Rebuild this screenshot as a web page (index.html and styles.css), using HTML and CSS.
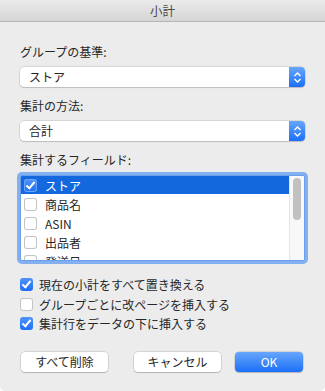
FILE: index.html
```
<!DOCTYPE html>
<html lang="ja">
<head>
  <meta charset="UTF-8">
  <title>小計</title>
  <link rel="stylesheet" href="styles.css">
</head>
<body>
  <div class="window">
    <!-- Barra de título -->
    <div class="titlebar">小計</div>

    <div class="content">
      <div class="label first">グループの基準:</div>
      <div class="popup">
        <span>ストア</span>
        <span class="stepper">
          <svg width="9" height="13" viewBox="0 0 9 13"><path d="M1.5 5 L4.5 2 L7.5 5 M1.5 8 L4.5 11 L7.5 8" fill="none" stroke="#fff" stroke-width="1.4"/></svg>
        </span>
      </div>

      <div class="label">集計の方法:</div>
      <div class="popup">
        <span>合計</span>
        <span class="stepper">
          <svg width="9" height="13" viewBox="0 0 9 13"><path d="M1.5 5 L4.5 2 L7.5 5 M1.5 8 L4.5 11 L7.5 8" fill="none" stroke="#fff" stroke-width="1.4"/></svg>
        </span>
      </div>

      <div class="label">集計するフィールド:</div>
      <div class="listbox">
        <div class="rows">
          <div class="row selected"><span class="cb on"></span>ストア</div>
          <div class="row"><span class="cb"></span>商品名</div>
          <div class="row"><span class="cb"></span>ASIN</div>
          <div class="row"><span class="cb"></span>出品者</div>
          <div class="row"><span class="cb"></span>発送日</div>
        </div>
        <div class="scrollbar"><div class="thumb"></div></div>
      </div>

      <div class="options">
        <div class="option"><span class="cb on"></span>現在の小計をすべて置き換える</div>
        <div class="option"><span class="cb"></span>グループごとに改ページを挿入する</div>
        <div class="option"><span class="cb on"></span>集計行をデータの下に挿入する</div>
      </div>

      <div class="buttons">
        <button class="btn">すべて削除</button>
        <button class="btn">キャンセル</button>
        <button class="btn primary">OK</button>
      </div>
    </div>
  </div>
</body>
</html>
```

FILE: styles.css
```
body {
  margin: 0;
  background: #ffffff;
  font-family: "Noto Sans CJK JP", "Noto Sans", sans-serif;
  font-size: 12px;
  color: #262626;
}
.window {
  width: 325px;
  height: 391px;
  background: #ececec;
  border-radius: 0 0 5px 5px;
  overflow: hidden;
}
/* Barra de título */
.titlebar {
  height: 21px;
  line-height: 21px;
  text-align: center;
  font-size: 12.5px;
  color: #4a4a4a;
  background: linear-gradient(#ebebeb, #d5d5d5);
  border-bottom: 1px solid #b6b6b6;
}
.content {
  padding: 0 20px;
}
.label {
  height: 16px;
  line-height: 16px;
  margin-top: 11px;
}
.label.first {
  margin-top: 22px;
}
/* Menús desplegables */
.popup {
  margin-top: 7px;
  height: 20px;
  background: #fff;
  border-radius: 4px;
  box-shadow: 0 0 0 0.5px rgba(0,0,0,0.18), 0 1px 1px rgba(0,0,0,0.12);
  display: flex;
  align-items: center;
  padding-left: 9px;
  overflow: hidden;
}
.popup span:first-child {
  flex: 1;
  line-height: 20px;
}
.stepper {
  width: 16px;
  height: 20px;
  background: linear-gradient(#67a6fb, #1b6ff7);
  display: flex;
  align-items: center;
  justify-content: center;
}
/* Lista de campos */
.listbox {
  margin-top: 7px;
  height: 84px;
  background: #fff;
  border: 1px solid #6a9ee8;
  box-shadow: 0 0 0 3px #82b0f0;
  border-radius: 2px;
  display: flex;
  overflow: hidden;
}
.rows {
  flex: 1;
  overflow: hidden;
}
.row {
  height: 19px;
  line-height: 19px;
  display: flex;
  align-items: center;
  padding-left: 3px;
  gap: 8px;
}
.row.selected {
  background: #1468dd;
  color: #fff;
  height: 18px;
  margin-bottom: 1px;
}
.scrollbar {
  width: 14px;
  background: #f8f8f8;
  border-left: 1px solid #e6e6e6;
  display: flex;
  justify-content: center;
  padding-top: 2px;
}
.thumb {
  width: 8px;
  height: 42px;
  border-radius: 4px;
  background: #c1c1c1;
}
/* Casillas */
.cb {
  width: 13px;
  height: 13px;
  border-radius: 3px;
  background: #fff;
  box-shadow: inset 0 0 0 1px #c4c4c4;
  flex: none;
  position: relative;
}
.cb.on {
  background: linear-gradient(#4f92fa, #1e6ff6);
  box-shadow: none;
}
.row.selected .cb.on {
  box-shadow: inset 0 0 0 1px #6aa2f5;
}
.cb.on::after {
  content: "";
  position: absolute;
  left: 4px;
  top: 1px;
  width: 3px;
  height: 7px;
  border: solid #fff;
  border-width: 0 2px 2px 0;
  transform: rotate(40deg);
}
.options {
  margin-top: 14px;
}
.option {
  height: 19.5px;
  display: flex;
  align-items: center;
  gap: 6px;
}
/* Botones */
.buttons {
  margin-top: 18px;
  display: flex;
}
.btn {
  font: inherit;
  height: 20px;
  padding: 0;
  border: none;
  border-radius: 4px;
  background: #fff;
  color: #262626;
  box-shadow: 0 0 0 0.5px rgba(0,0,0,0.2), 0 1px 1px rgba(0,0,0,0.15);
  width: 87px;
  line-height: 20px;
  margin-left: 1px;
}
.btn + .btn {
  margin-left: 26px;
}
.btn.primary {
  width: 68px;
  margin-left: 14px;
  color: #fff;
  background: linear-gradient(#67a6fb, #1b6ff7);
}
```
